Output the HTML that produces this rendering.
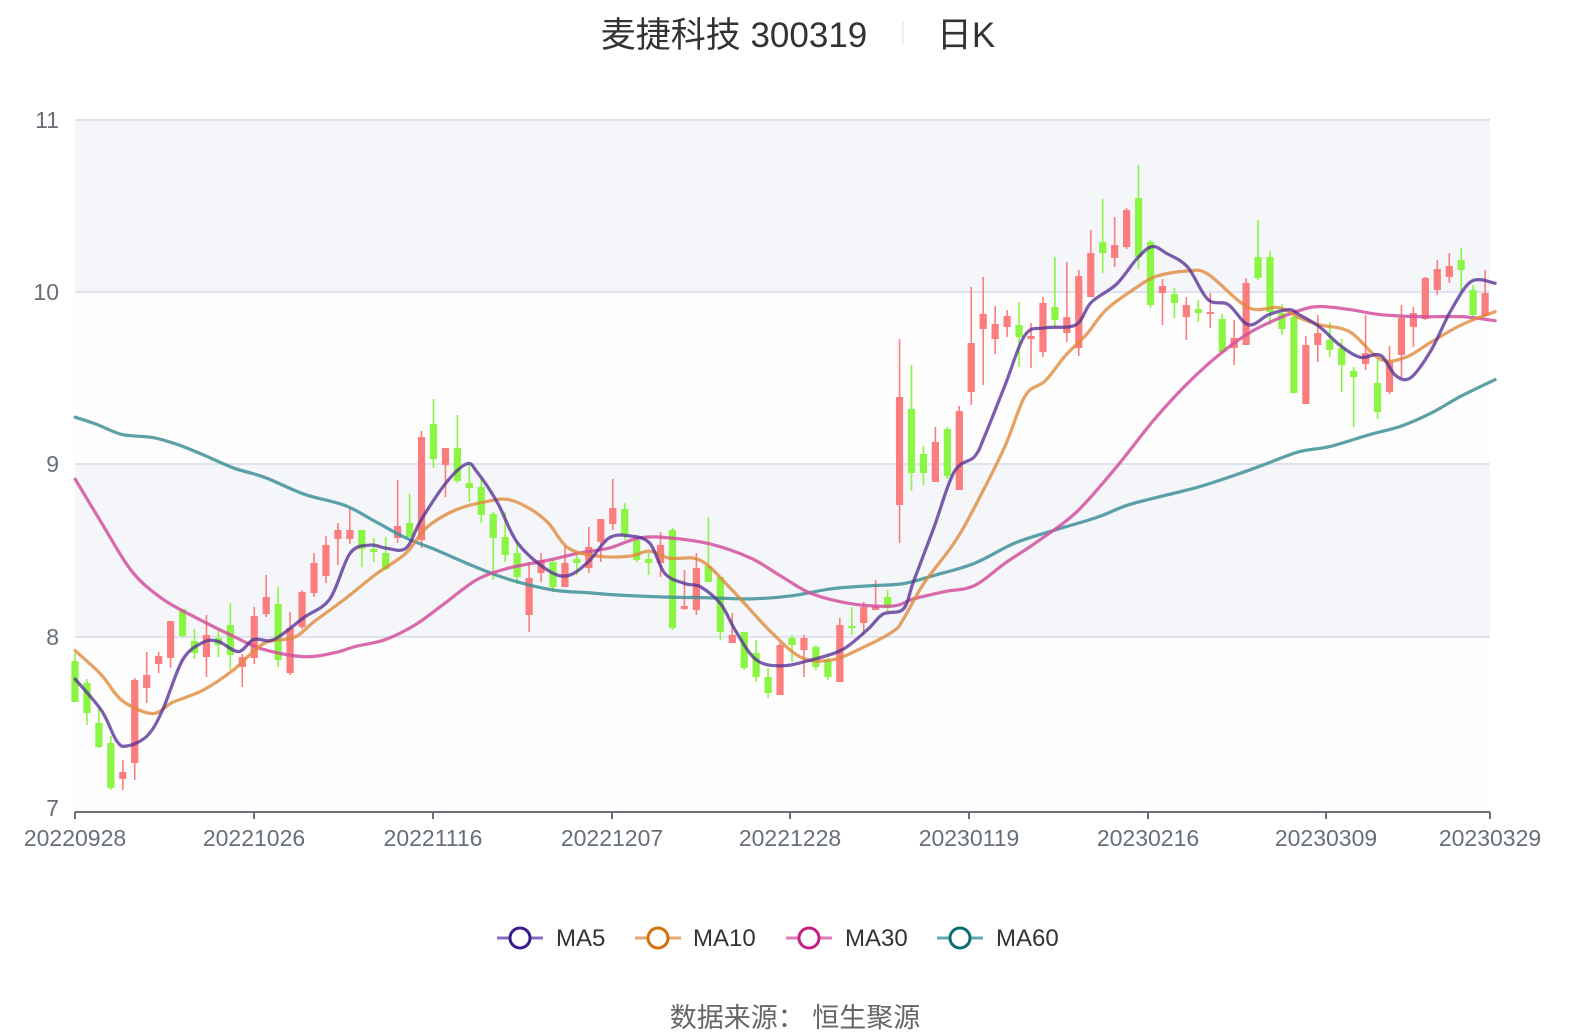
<!DOCTYPE html>
<html><head><meta charset="utf-8"><style>
html,body{margin:0;padding:0;background:#fff;width:1586px;height:1034px;overflow:hidden}
svg text{font-family:"Liberation Sans","Noto Sans CJK SC",sans-serif}
</style></head><body>
<svg id="s" width="1586" height="1034" viewBox="0 0 1586 1034" xmlns="http://www.w3.org/2000/svg">
<rect width="1586" height="1034" fill="#fff"/>
<text x="734" y="47" font-size="35" fill="#333" text-anchor="middle">麦捷科技 300319</text>
<rect x="902" y="22" width="1.5" height="22" fill="#e6e6e6"/>
<text x="966" y="47" font-size="35" fill="#333" text-anchor="middle">日K</text>
<rect x="75" y="120" width="1415" height="172" fill="#f5f6fa"/>
<rect x="75" y="292" width="1415" height="172" fill="#fdfdfe"/>
<rect x="75" y="464" width="1415" height="173" fill="#f5f6fa"/>
<rect x="75" y="637" width="1415" height="174" fill="#fdfdfe"/>
<g stroke="#dfe3ee" stroke-width="2">
<line x1="75" y1="120" x2="1490" y2="120"/><line x1="75" y1="292" x2="1490" y2="292"/>
<line x1="75" y1="464" x2="1490" y2="464"/><line x1="75" y1="637" x2="1490" y2="637"/>
</g>
<g font-size="23" fill="#666f7a" text-anchor="end">
<text x="59" y="128">11</text><text x="59" y="300">10</text><text x="59" y="472">9</text><text x="59" y="645">8</text><text x="59" y="816">7</text>
</g>
<g id="candles"></g>
<g id="ma" transform="scale(1.015)" fill="none" stroke-width="3.2" stroke-linejoin="round" stroke-linecap="round"></g>
<g stroke="#6e7079" stroke-width="2">
<line x1="75" y1="812" x2="1490" y2="812"/>
<line x1="75" y1="812" x2="75" y2="819"/><line x1="254" y1="812" x2="254" y2="819"/><line x1="433" y1="812" x2="433" y2="819"/><line x1="612" y1="812" x2="612" y2="819"/><line x1="790" y1="812" x2="790" y2="819"/><line x1="969" y1="812" x2="969" y2="819"/><line x1="1148" y1="812" x2="1148" y2="819"/><line x1="1326" y1="812" x2="1326" y2="819"/><line x1="1490" y1="812" x2="1490" y2="819"/>
</g>
<g font-size="23" fill="#666f7a" text-anchor="middle">
<text x="75" y="846">20220928</text><text x="254" y="846">20221026</text><text x="433" y="846">20221116</text><text x="612" y="846">20221207</text><text x="790" y="846">20221228</text><text x="969" y="846">20230119</text><text x="1148" y="846">20230216</text><text x="1326" y="846">20230309</text><text x="1490" y="846">20230329</text>
</g>
<g font-size="24" fill="#333">
<line x1="497" y1="938" x2="543" y2="938" stroke="#8a6cbd" stroke-width="3"/><circle cx="520" cy="938" r="10" fill="#fff" stroke="#3d1a8c" stroke-width="3"/><text x="556" y="946">MA5</text>
<line x1="635" y1="938" x2="681" y2="938" stroke="#e8a874" stroke-width="3"/><circle cx="658" cy="938" r="10" fill="#fff" stroke="#d4700c" stroke-width="3"/><text x="693" y="946">MA10</text>
<line x1="786" y1="938" x2="832" y2="938" stroke="#e07ab8" stroke-width="3"/><circle cx="809" cy="938" r="10" fill="#fff" stroke="#c81f86" stroke-width="3"/><text x="845" y="946">MA30</text>
<line x1="937" y1="938" x2="983" y2="938" stroke="#64a8ae" stroke-width="3"/><circle cx="960" cy="938" r="10" fill="#fff" stroke="#0b6e72" stroke-width="3"/><text x="996" y="946">MA60</text>
</g>
<text x="795" y="1027" font-size="27" fill="#666" text-anchor="middle">数据来源：  恒生聚源</text>
</svg>
<script>
var D=[
"g661,702,653,702","g683,713,679,725","g723,747,708,748","g743,788,736,790","r772,779,760,790","r680,763,678,780","r675,688,652,703","r656,664,652,673","r621,658,621,668","g609,636,609,638","g641,653,629,659","r635,657,615,677","g638,645,629,657","g625,655,603,670","r657,667,654,687","r616,658,607,664","r597,614,575,617","g604,660,587,667","r628,673,612,675","r592,627,590,629","r563,593,553,597","r545,576,536,583","r530,539,523,565","r530,539,508,544","g530,549,530,567","g549,552,538,562","g553,569,537,570","r526,538,480,543","g523,537,494,535","r437,540,431,548","g424,459,399,468","r448,465,448,497","g448,481,415,483","g483,488,463,502","g487,515,478,523","g514,538,512,580","g537,555,512,562","g553,577,543,584","r578,615,562,632","r560,573,553,582","g562,587,560,592","r563,587,546,587","g559,563,555,575","r547,568,527,573","r519,542,519,562","r508,524,479,530","g509,535,503,540","g540,560,538,562","g559,563,553,575","r545,563,532,577","g530,628,528,630","r606,609,570,610","r568,610,553,615","g566,582,517,582","g577,632,577,640","r635,643,613,643","g632,668,632,670","g653,677,640,682","g677,693,668,698","r645,695,643,695","g638,645,635,662","r638,650,635,677","g647,667,645,670","g660,677,658,680","r625,682,618,682","g626,628,607,635","r607,623,602,635","r607,610,580,610","g597,608,590,612",
"r397,505,339,543","g409,473,365,491","g454,473,446,485","r442,482,427,482","g429,476,427,479","r411,490,406,490","r343,392,287,405","r314,329,277,385","r324,339,306,354","r316,327,310,337","g325,337,302,367","r336,339,323,368","r303,352,297,357","g307,320,257,328","r317,333,262,342","r276,348,270,356","r253,297,230,297","g242,253,199,273","r245,258,217,267","r210,247,208,249","g198,257,165,269","g242,305,240,308","r286,293,279,325","g294,303,288,318","r305,317,297,340","g309,313,300,322",
"r312,314,293,328","g319,352,314,352","r338,348,320,365","r283,345,278,345","g257,278,220,280","g257,312,251,325","g313,329,304,335","g317,393,317,393","r345,404,336,404","r333,345,315,362","g340,350,322,357","g348,365,339,392","g371,377,367,427","r353,364,315,370","g383,412,360,419","r362,392,346,394","r318,355,305,378","r313,327,307,347","r278,319,277,320","r269,290,260,295","r266,277,253,283","g260,270,248,292","g290,315,285,317","r293,316,270,316"];
var g=document.getElementById("candles"),h="";
for(var i=0;i<D.length;i++){var c=D[i][0],v=D[i].slice(1).split(",").map(Number),x=75+i*11.95;
var col=c=="r"?"#fb7d7d":"#8af542";
h+='<rect x="'+(x-0.8)+'" y="'+v[2]+'" width="1.6" height="'+Math.max(1,v[3]-v[2])+'" fill="'+col+'"/>';
h+='<rect x="'+(x-3.6)+'" y="'+v[0]+'" width="7.2" height="'+Math.max(1.5,v[1]-v[0])+'" fill="'+col+'"/>';}
g.innerHTML=h;
var L=[
["#3f9196",.85,"74,411 95,418 120,428 150,431 175,438 200,448 230,461 260,470 300,487 340,498 370,514 400,530 430,542 460,555 490,567 520,576 550,582 580,584 604,586 650,588 700,589 740,590 780,587 820,580 860,577 890,575 920,567 960,555 1000,535 1040,522 1080,510 1110,498 1140,490 1180,480 1220,467 1250,456 1280,445 1310,440 1350,428 1380,420 1410,407 1440,390 1473,374"],
["#d2519e",.85,"74,472 100,515 130,563 160,590 190,607 230,627 260,640 300,647 330,643 350,637 380,630 410,615 440,593 470,571 500,560 540,552 570,545 600,540 630,530 660,530 700,536 740,550 770,568 800,585 840,595 880,597 900,590 930,583 960,577 990,555 1020,535 1060,505 1100,460 1140,410 1180,368 1220,335 1250,318 1280,306 1300,302 1330,305 1360,310 1400,312 1440,312 1473,316"],
["#e08a3c",.8,"74,641 100,665 120,690 150,703 170,692 200,680 230,660 260,634 290,628 310,612 340,590 370,566 400,545 420,520 450,502 480,494 500,492 520,500 540,515 560,540 590,548 620,548 640,543 660,550 690,552 720,580 760,623 790,648 820,650 850,638 880,622 890,610 910,575 940,535 960,500 990,440 1010,390 1030,375 1050,350 1070,330 1090,305 1120,283 1140,272 1170,267 1190,270 1230,303 1260,303 1280,313 1300,320 1330,327 1360,354 1385,352 1410,337 1440,320 1473,307"],
["#5a3596",.8,"74,669 100,700 115,730 125,735 145,725 160,700 180,650 200,633 215,632 235,642 250,630 270,630 300,608 325,590 345,545 365,537 380,540 400,540 415,512 440,475 460,457 470,465 490,495 510,535 540,562 560,567 580,553 600,530 620,528 640,535 655,565 675,575 690,578 710,595 725,622 745,650 770,656 800,650 830,640 855,620 870,605 890,600 900,573 920,520 940,465 960,450 970,430 990,380 1010,330 1030,323 1060,320 1075,298 1100,280 1120,255 1135,243 1150,250 1170,263 1190,295 1210,300 1230,320 1250,310 1270,305 1280,310 1300,322 1320,340 1340,352 1360,350 1375,370 1390,372 1410,345 1430,305 1450,277 1473,279"]];
var m="";
L.forEach(function(l){var p=l[2].split(" ").map(function(s){return s.split(",").map(Number)});
var d="M"+p[0][0]+","+p[0][1];
for(var i=0;i<p.length-1;i++){var p0=p[i-1]||p[i],p1=p[i],p2=p[i+1],p3=p[i+2]||p2;
var c1x=p1[0]+(p2[0]-p0[0])/6,c1y=p1[1]+(p2[1]-p0[1])/6,c2x=p2[0]-(p3[0]-p1[0])/6,c2y=p2[1]-(p3[1]-p1[1])/6;
d+=" C"+c1x.toFixed(1)+","+c1y.toFixed(1)+" "+c2x.toFixed(1)+","+c2y.toFixed(1)+" "+p2[0]+","+p2[1];}
m+='<path d="'+d+'" stroke="'+l[0]+'" stroke-opacity="'+l[1]+'"/>';});
document.getElementById("ma").innerHTML=m;
</script>
</body></html>
